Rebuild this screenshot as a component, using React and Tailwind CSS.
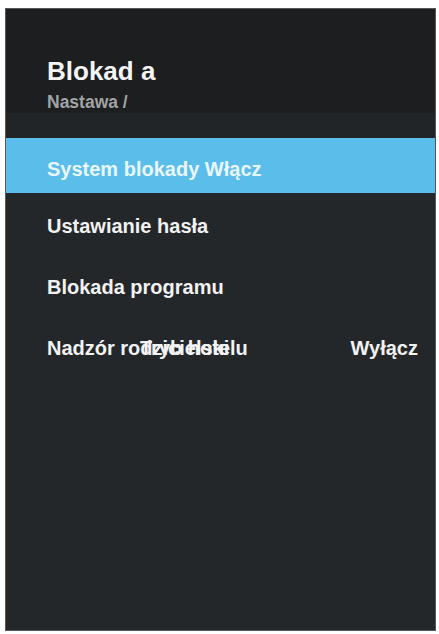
import React from 'react';

const font = { fontFamily: '"Liberation Sans", Arial, sans-serif' };

const ROWS = [
  { id: 'pwd', label: 'Ustawianie hasła' },
  { id: 'prog', label: 'Blokada programu' },
];

export default function App() {
  return (
    <div className="w-[439px] h-[634px] bg-white pt-[8px] pl-[5px] pr-[3px] pb-[3px]" style={font}>
      <div className="flex flex-col h-full bg-[#24272a] border border-[#55595c]">
        {/* Header */}
        <div className="bg-[#1c1e1f] h-[104px] pt-[49px] pl-[41px]">
          <h1 className="text-[26px] leading-[26px] font-bold text-[#f4f4f4]">Blokad a</h1>
          <p className="mt-[9px] text-[17.5px] leading-[18px] font-bold text-[#a2a4a5]">Nastawa /</p>
        </div>
        <div className="h-[25px] bg-[#222527]"></div>

        {/* Menu */}
        <div className="bg-[#5bbde9] h-[55px] pt-[21px] pl-[41px]">
          <span className="text-[20px] leading-[20px] font-bold text-[#e8f8fe]">System blokady Włącz</span>
        </div>
        {ROWS.map(row => (
          <div key={row.id} className="h-[61px] pt-[23px] pl-[41px]">
            <span className="text-[20px] leading-[20px] font-bold text-[#f2f2f2]">{row.label}</span>
          </div>
        ))}
        <div className="h-[61px] pt-[23px] pl-[41px] pr-[17px] flex justify-between items-start">
          <div className="relative text-[20px] leading-[20px] font-bold text-[#f2f2f2]">
            <span>Nadzór rodzicielski</span>
            <span className="absolute left-[93px] top-0 whitespace-nowrap">Tryb hotelu</span>
          </div>
          <span className="text-[20px] leading-[20px] font-bold text-[#f2f2f2]">Wyłącz</span>
        </div>
        <div className="flex-1"></div>
      </div>
    </div>
  );
}
